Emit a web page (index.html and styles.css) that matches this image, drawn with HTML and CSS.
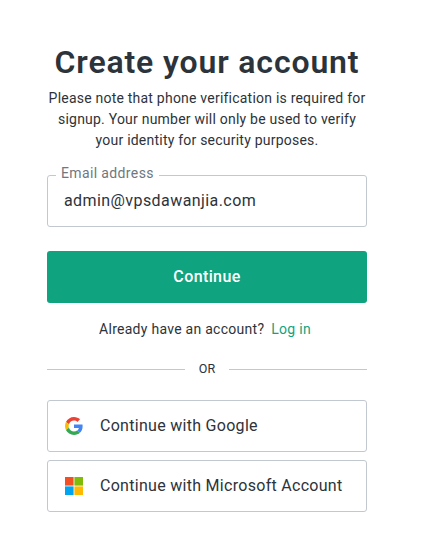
FILE: index.html
```html
<!DOCTYPE html>
<html lang="en">
<head>
<meta charset="utf-8">
<title>Create your account</title>
<link rel="stylesheet" href="styles.css">
</head>
<body>
<main class="signup">
  <h1 class="title">Create your account</h1>
  <p class="note">Please note that phone verification is required for<br>signup. Your number will only be used to verify<br>your identity for security purposes.</p>
  <div class="field"><label class="label" for="email">Email address</label><input class="input" id="email" type="text" value="admin@vpsdawanjia.com"></div>
  <button class="continue">Continue</button>
  <p class="login"><span>Already have an account?</span><a class="link">Log in</a></p>
  <div class="divider"><span class="or">OR</span></div>
  <div class="providers">
    <button class="provider"><svg class="icon" viewBox="0 0 48 48"><path fill="#EA4335" d="M24 9.5c3.54 0 6.71 1.22 9.21 3.6l6.85-6.85C35.9 2.38 30.47 0 24 0 14.62 0 6.51 5.38 2.56 13.22l7.98 6.19C12.43 13.72 17.74 9.5 24 9.5z"/><path fill="#4285F4" d="M46.98 24.55c0-1.57-.15-3.09-.38-4.55H24v9.02h12.94c-.58 2.96-2.26 5.48-4.78 7.18l7.73 6c4.51-4.18 7.09-10.36 7.09-17.65z"/><path fill="#FBBC05" d="M10.53 28.59c-.48-1.45-.76-2.99-.76-4.59s.27-3.14.76-4.59l-7.98-6.19C.92 16.46 0 20.12 0 24s.92 7.54 2.56 10.78l7.97-6.19z"/><path fill="#34A853" d="M24 48c6.48 0 11.93-2.13 15.89-5.81l-7.73-6c-2.15 1.45-4.92 2.3-8.16 2.3-6.26 0-11.57-4.22-13.47-9.91l-7.98 6.19C6.51 42.62 14.62 48 24 48z"/></svg><span>Continue with Google</span></button>
    <button class="provider"><svg class="icon" viewBox="0 0 18 18"><path fill="#F25022" d="M0 0h8.6v8.6H0z"/><path fill="#80BB0A" d="M9.4 0H18v8.6H9.4z"/><path fill="#00A4EF" d="M0 9.4h8.6V18H0z"/><path fill="#FFB900" d="M9.4 9.4H18V18H9.4z"/></svg><span>Continue with Microsoft Account</span></button>
  </div>
</main>
</body>
</html>
```
FILE: styles.css
```css
* { box-sizing: border-box; }
body { margin: 0; background: #fff; color: #2d333a; font-family: Roboto, "Liberation Sans", sans-serif; font-weight: 400; }
.signup { width: 320px; margin: 0 0 0 47px; padding-top: 42px; }
.title { margin: 0; text-align: center; white-space: nowrap; font-size: 32px; line-height: 40px; font-weight: 600; letter-spacing: 0.85px; }
.note { margin: 6px 0 0; text-align: center; white-space: nowrap; font-size: 14px; line-height: 21px; letter-spacing: 0.22px; }
.field { position: relative; height: 52px; margin-top: 24px; }
.label { position: absolute; left: 9px; top: -12px; padding: 0 5px; background: #fff; color: #6f7780; font-size: 14px; line-height: 20px; letter-spacing: 0.37px; }
.input { width: 100%; height: 52px; padding: 0 16px 2px; border: 1px solid #c2c8d0; border-radius: 3px; color: inherit; font: 16px/24px Roboto, sans-serif; letter-spacing: 0.42px; background: transparent; outline: 0; }
.continue { display: block; width: 100%; height: 52px; margin: 24px 0 0; padding: 0 0 1px; border: 0; border-radius: 3px; background: #10a37f; color: #fff; font: 500 16px/24px Roboto, sans-serif; letter-spacing: 0.38px; }
.login { display: flex; justify-content: center; gap: 7px; margin: 16px 0 0; padding-right: 4px; font-size: 14px; line-height: 20px; letter-spacing: 0.27px; white-space: nowrap; }
.link { color: #10a37f; }
.divider { display: flex; align-items: center; height: 20px; margin-top: 20px; font-size: 12.5px; }
.divider::before, .divider::after { content: ""; flex: 1; height: 1px; background: #c2c8d0; }
.or { width: 44px; line-height: 14px; text-align: center; }
.providers { display: grid; gap: 8px; margin-top: 21px; }
.provider { display: flex; align-items: center; gap: 17px; height: 52px; padding: 0 17px; border: 1px solid #c2c8d0; border-radius: 3px; background: #fff; color: inherit; font: 16px/24px Roboto, sans-serif; letter-spacing: 0.29px; white-space: nowrap; }
.icon { width: 18px; height: 18px; flex: none; }
```
